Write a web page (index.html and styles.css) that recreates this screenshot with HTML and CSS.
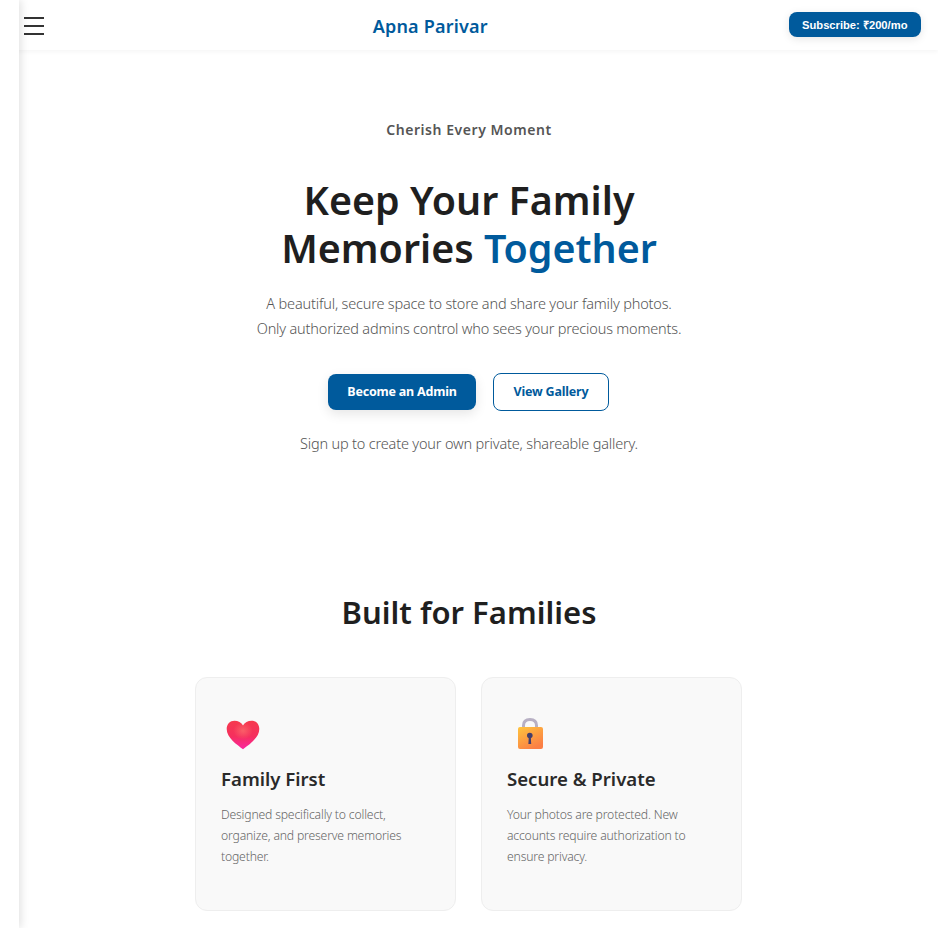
FILE: index.html
```html
<!DOCTYPE html>
<html lang="en">
<head>
    <meta charset="UTF-8">
    <meta name="viewport" content="width=device-width, initial-scale=1.0">
    <title>Apna Parivar</title>
    <link rel="stylesheet" href="styles.css">
</head>
<body>
    <aside class="sidebar"></aside>

    <header class="site-header">
        <button class="menu-toggle" aria-label="Menu">
            <span></span>
            <span></span>
            <span></span>
        </button>
        <div class="brand">Apna Parivar</div>
        <button class="subscribe-btn">Subscribe: ₹200/mo</button>
    </header>

    <section class="hero">
        <p class="tagline">Cherish Every Moment</p>
        <h1>Keep Your Family<br>Memories <span class="accent">Together</span></h1>
        <p class="lead">A beautiful, secure space to store and share your family photos.<br>Only authorized admins control who sees your precious moments.</p>
        <div class="hero-actions">
            <a class="btn btn-primary" href="#">Become an Admin</a>
            <a class="btn btn-outline" href="#">View Gallery</a>
        </div>
        <p class="hint">Sign up to create your own private, shareable gallery.</p>
    </section>

    <section class="features">
        <h2>Built for Families</h2>
        <div class="feature-grid">
            <div class="feature-card">
                <svg class="feature-icon" viewBox="0 0 40 40" width="40" height="40">
                    <defs>
                        <linearGradient id="heart-fill" x1="0" y1="0" x2="0" y2="1">
                            <stop offset="0" stop-color="#f63a4e"/>
                            <stop offset="0.55" stop-color="#f52f5e"/>
                            <stop offset="1" stop-color="#fb27a2"/>
                        </linearGradient>
                        <radialGradient id="heart-shine" cx="0.5" cy="0.35" r="0.3">
                            <stop offset="0" stop-color="#ff8a78" stop-opacity="0.5"/>
                            <stop offset="1" stop-color="#ff8a78" stop-opacity="0"/>
                        </radialGradient>
                        <path id="heart-shape" d="M22 34.3C16 29.5 5.7 23 5.7 14C5.7 9 9 5.7 13.5 5.7C17 5.7 20.5 7.5 22 10.5C23.5 7.5 27 5.7 30.5 5.7C35 5.7 38.3 9 38.3 14C38.3 23 28 29.5 22 34.3Z"/>
                    </defs>
                    <use href="#heart-shape" fill="url(#heart-fill)"/>
                    <use href="#heart-shape" fill="url(#heart-shine)"/>
                </svg>
                <h3>Family First</h3>
                <p>Designed specifically to collect, organize, and preserve memories together.</p>
            </div>
            <div class="feature-card">
                <svg class="feature-icon" viewBox="0 0 40 40" width="40" height="40">
                    <defs>
                        <linearGradient id="lock-body" x1="0" y1="0" x2="0.6" y2="1">
                            <stop offset="0" stop-color="#ffc43d"/>
                            <stop offset="1" stop-color="#fb7f45"/>
                        </linearGradient>
                    </defs>
                    <path d="M16.5 14V10.5C16.5 6.5 19 4.5 23 4.5C27 4.5 29.5 6.5 29.5 10.5V14" fill="none" stroke="#b8b0c4" stroke-width="3"/>
                    <rect x="11" y="12" width="25" height="22" rx="2" fill="url(#lock-body)"/>
                    <circle cx="22.8" cy="20.5" r="2.8" fill="#443e6b"/>
                    <path d="M21.8 21.5H23.8L24.2 29H21.4Z" fill="#443e6b"/>
                </svg>
                <h3>Secure &amp; Private</h3>
                <p>Your photos are protected. New accounts require authorization to ensure privacy.</p>
            </div>
        </div>
    </section>
</body>
</html>
```
FILE: styles.css
```css
* {
    box-sizing: border-box;
}
body {
    margin: 0;
    height: 928px;
    overflow: hidden;
    background-color: #fff;
    color: #1f1f1f;
    font-family: "Noto Sans", sans-serif;
}
.sidebar {
    position: fixed;
    top: 0;
    left: 0;
    bottom: 0;
    width: 19px;
    background-color: #fff;
    box-shadow: 2px 0 8px rgba(0, 0, 0, 0.12);
    z-index: 2;
}
.site-header {
    display: flex;
    align-items: center;
    justify-content: space-between;
    height: 50px;
    padding: 0 17px 0 24px;
    background-color: #fff;
    box-shadow: 0 2px 4px rgba(0, 0, 0, 0.04);
}
.menu-toggle {
    display: flex;
    flex-direction: column;
    gap: 6px;
    width: 48px;
    padding: 0;
    margin-top: 2px;
    background: none;
    border: none;
}
.menu-toggle span {
    display: block;
    width: 20px;
    height: 2px;
    background-color: #333;
}
.brand {
    margin-top: 2px;
    color: #005a9c;
    font-size: 18px;
    font-weight: 600;
    letter-spacing: 0.2px;
}
.subscribe-btn {
    height: 25px;
    padding: 0 13.5px;
    margin-top: -1px;
    background-color: #005a9c;
    color: #fff;
    border: none;
    border-radius: 8px;
    font-family: "Liberation Sans", Arial, sans-serif;
    font-size: 11.2px;
    font-weight: 700;
    box-shadow: 0 2px 8px rgba(0, 0, 0, 0.1);
}
.hero {
    display: flex;
    flex-direction: column;
    align-items: center;
    padding-top: 69px;
    text-align: center;
}
.tagline {
    margin: 0 0 35px;
    color: #555;
    font-size: 14px;
    font-weight: 600;
    line-height: 22px;
    letter-spacing: 0.55px;
}
h1 {
    margin: 0 0 19px;
    font-size: 39.4px;
    font-weight: 600;
    line-height: 48px;
}
.accent {
    color: #005a9c;
}
.lead {
    margin: 0 0 32px;
    color: #555;
    font-size: 14.5px;
    font-weight: 300;
    line-height: 25px;
    letter-spacing: -0.18px;
}
.hero-actions {
    display: flex;
    align-items: center;
    gap: 17px;
    margin: 0 1px 21px 0;
}
.btn {
    display: block;
    border-radius: 8px;
    font-size: 12.5px;
    font-weight: 700;
    letter-spacing: -0.2px;
    text-align: center;
    text-decoration: none;
}
.btn-primary {
    width: 148px;
    height: 36px;
    line-height: 36px;
    background-color: #005a9c;
    color: #fff;
    box-shadow: 0 4px 12px rgba(0, 0, 0, 0.1);
}
.btn-outline {
    width: 116px;
    height: 38px;
    line-height: 36px;
    border: 1px solid #005a9c;
    color: #005a9c;
}
.hint {
    margin: 0;
    color: #555;
    font-size: 14.5px;
    font-weight: 300;
    line-height: 22px;
    letter-spacing: -0.18px;
}
.features {
    padding-top: 137px;
}
h2 {
    margin: 0 0 44px;
    font-size: 31px;
    font-weight: 600;
    line-height: 42px;
    text-align: center;
}
.feature-grid {
    display: grid;
    grid-template-columns: 261px 261px;
    gap: 25px;
    justify-content: center;
    padding-right: 1px;
}
.feature-card {
    height: 234px;
    padding: 37px 25px 0;
    background-color: #f9f9f9;
    border: 1px solid #eee;
    border-radius: 12px;
}
.feature-icon {
    display: block;
}
.feature-card h3 {
    margin: 12px 0 13px;
    color: #2a2a2a;
    font-size: 18.6px;
    font-weight: 600;
    line-height: 24px;
}
.feature-card p {
    margin: 0;
    color: #666;
    font-size: 12.2px;
    font-weight: 300;
    line-height: 21px;
    letter-spacing: -0.17px;
}
```
